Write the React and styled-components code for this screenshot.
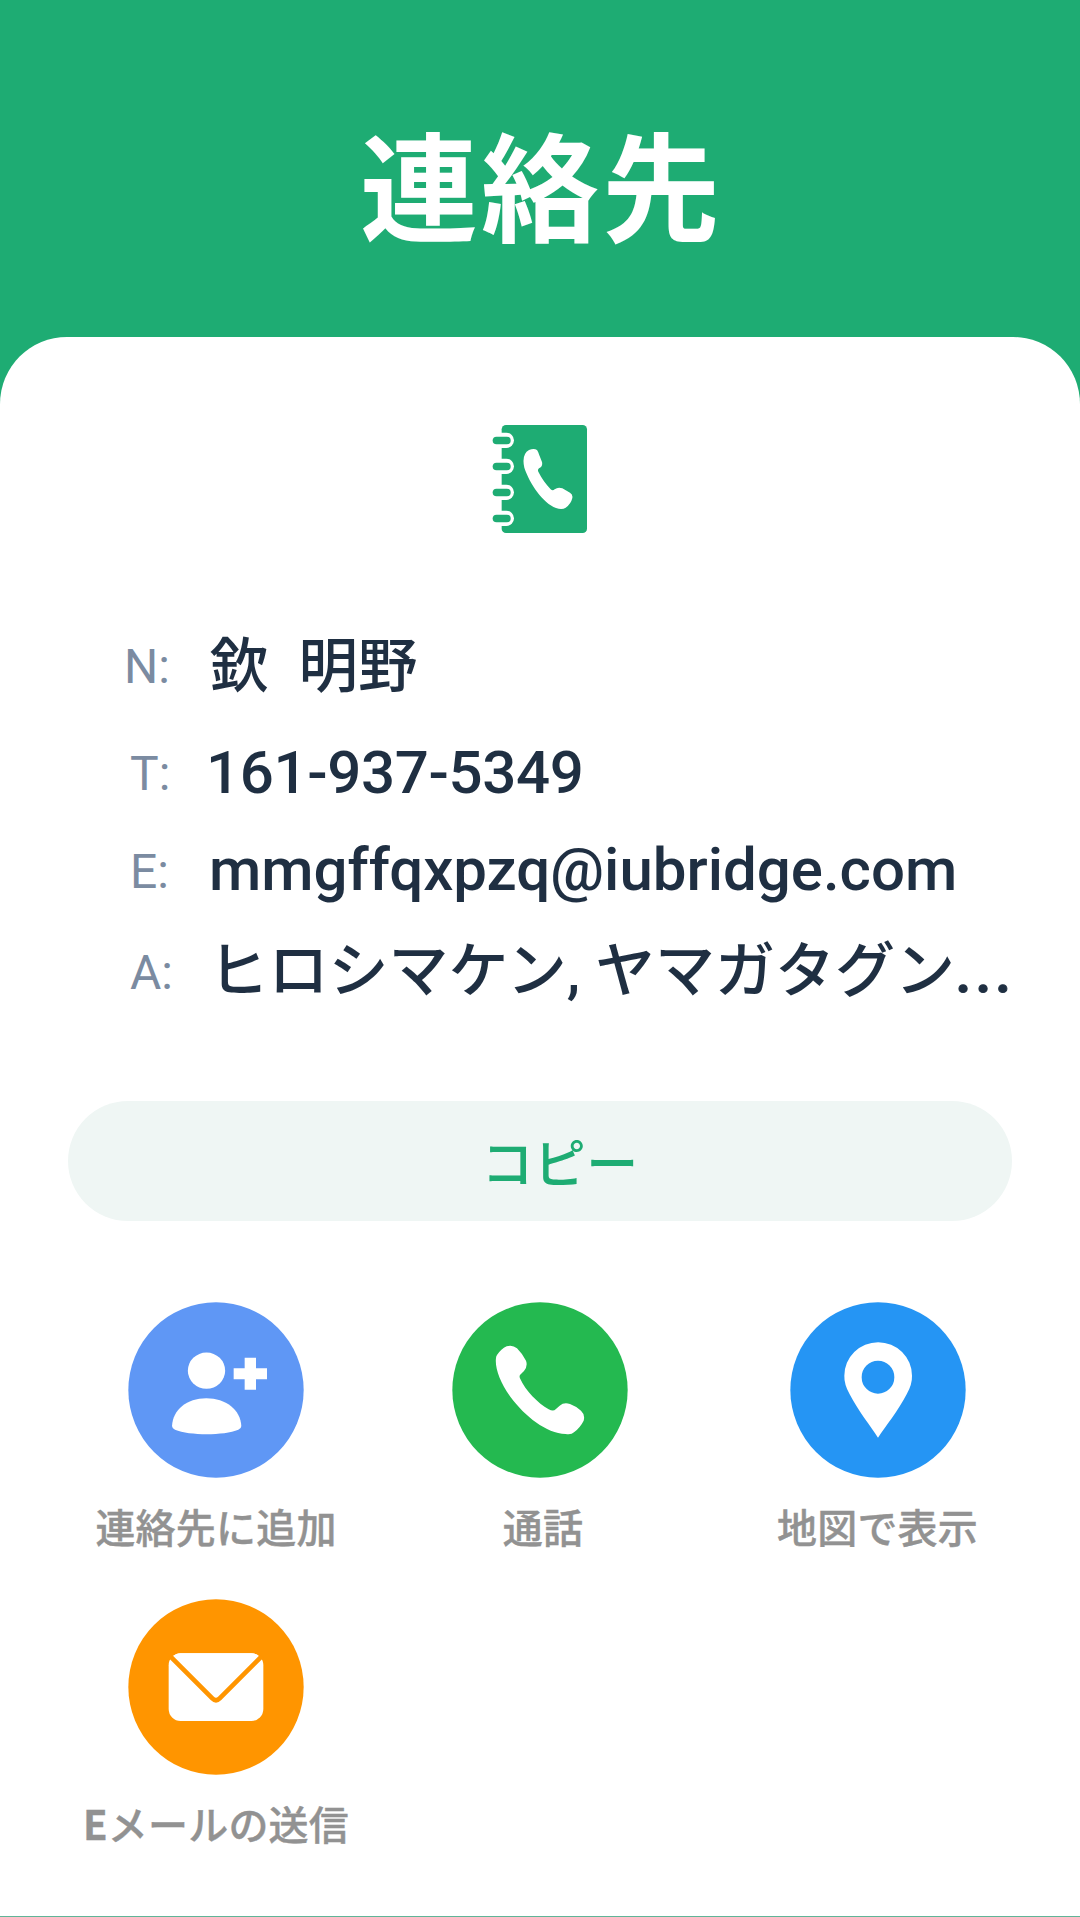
import React from "react";
import styled, { createGlobalStyle } from "styled-components";

const GlobalStyle = createGlobalStyle`
  *, *::before, *::after { box-sizing: border-box; }
  body { margin: 0; background: #1eac73; }
`;

const Page = styled.main`
  width: 1080px;
  height: 1917px;
  display: flex;
  flex-direction: column;
  overflow: hidden;
  background: #1eac73;
  font-family: Roboto, "Noto Sans CJK JP", sans-serif;
`;

const Header = styled.header`
  height: 337px;
  flex: none;
  display: flex;
  justify-content: center;
  padding: 92px 0 0 3px;
`;

const Title = styled.h1`
  margin: 0;
  font-family: "Noto Sans CJK JP", sans-serif;
  font-size: 118px;
  line-height: 180px;
  font-weight: 700;
  letter-spacing: 3px;
  color: #fff;
`;

const Card = styled.section`
  height: 1580px;
  flex: none;
  display: flex;
  flex-direction: column;
  padding: 87px 68px 0;
  border-radius: 67px 67px 0 0;
  border-bottom: 1px solid #60b497;
  background: #fff;
`;

const BookIcon = styled.svg`
  width: 96px;
  height: 110px;
  flex: none;
  align-self: center;
`;

const Details = styled.dl`
  margin: 79px 0 0;
  height: 412px;
  flex: none;
`;

const Row = styled.div`
  height: ${(p) => p.$height}px;
  display: flex;
  align-items: flex-start;
`;

const Label = styled.dt`
  width: 140px;
  padding: ${(p) => p.$top}px 0 0 ${(p) => p.$left}px;
  font-size: 48px;
  line-height: 90px;
  color: #7b8ba1;
  flex: none;
`;

const Value = styled.dd`
  margin: 0;
  padding-top: ${(p) => p.$top}px;
  margin-left: ${(p) => p.$shift || 0}px;
  font-size: ${(p) => p.$size || 60}px;
  line-height: 90px;
  font-weight: 500;
  letter-spacing: ${(p) => p.$tracking || 0}px;
  color: #1f2f42;
  white-space: pre;
`;

const Ellipsis = styled.span`
  letter-spacing: 3.2px;
  -webkit-text-stroke: 1px #1f2f42;
`;

const CopyButton = styled.button`
  width: 944px;
  height: 120px;
  margin: 76px 0 0;
  padding: 0 0 0 40px;
  flex: none;
  border: 0;
  border-radius: 60px;
  background: #eff6f4;
  color: #1eac73;
  font-family: "Noto Sans CJK JP", sans-serif;
  font-size: 52px;
  line-height: 120px;
  font-weight: 500;
  letter-spacing: 0.4px;
`;

const Actions = styled.div`
  margin: 81px -68px 0;
  display: grid;
  grid-template-columns: 432px 216px 459px;
  grid-auto-rows: 297px;
`;

const Action = styled.div`
  display: flex;
  flex-direction: column;
  align-items: center;
`;

const ActionIcon = styled.svg`
  width: 176px;
  height: 176px;
  flex: none;
`;

const ActionLabel = styled.span`
  margin-top: 18px;
  padding-left: ${(p) => p.$inset || 0}px;
  font-family: "Noto Sans CJK JP", sans-serif;
  font-size: 40px;
  line-height: 60px;
  font-weight: 500;
  letter-spacing: 0.2px;
  -webkit-text-stroke: 0.4px #929292;
  color: #929292;
  white-space: nowrap;
`;

const Initial = styled.span`
  font-weight: 700;
`;

const ContactBook = () => (
  <BookIcon viewBox="66 72 288 330">
    <rect x="95" y="75" width="256" height="324" rx="13" fill="#1eac73" />
    {[121, 199, 277, 355].map((y) => (
      <g key={y}>
        <path d={`M84 ${y - 23}H109a23 23 0 0 1 0 46H84Z`} fill="#fff" />
        <rect x="68" y={y - 11} width="54" height="23" rx="11.5" fill="#1eac73" />
      </g>
    ))}
    <path
      d="M177 150Q192 144 201 150Q206 157 208 166L216 186Q219 199 207 205Q202 209 205 215C214 234 229 254 242 268Q248 274 254 268Q264 260 277 265L300 278Q309 284 307 294Q303 312 287 323Q276 331 258 324C219 309 180 253 163 203Q154 163 177 150Z"
      fill="#fff"
    />
  </BookIcon>
);

const AddPerson = () => (
  <ActionIcon viewBox="144 37 528 528">
    <circle cx="408" cy="301" r="263" fill="#5f97f5" />
    <ellipse cx="379.500" cy="243" rx="56" ry="54.500" fill="#fff" />
    <path d="M276 409C279 360 320 326 379 326S481 360 484 409Q484 416 475 420C431 438 329 438 285 420Q276 416 276 409Z" fill="#fff" />
    <path d="M494 204h34v32h33v33h-33v31h-34v-31h-33v-33h33Z" fill="#fff" />
  </ActionIcon>
);

const Phone = () => (
  <ActionIcon viewBox="36 37 528 528">
    <circle cx="300" cy="301" r="263" fill="#24b950" />
    <path
      d="M171 196Q183 178 200 170Q217 164 231 176Q247 192 258 213Q264 229 252 244Q244 252 240 256Q237 260 241 268C256 302 294 341 326 359Q340 366 347 359L359 348Q372 337 390 343Q409 350 423 363Q436 375 431 393Q421 413 402 428Q394 436 377 433C318 430 256 381 211 321C180 279 164 234 168 205Q168 200 171 196Z"
      fill="#fff"
    />
  </ActionIcon>
);

const MapPin = () => (
  <ActionIcon viewBox="88 37 528 528">
    <circle cx="352" cy="301" r="263" fill="#2595f4" />
    <path
      fillRule="evenodd"
      d="M352 444C331 411 292 363 267 314Q250 283 251 258A101 100 0 0 1 454 258Q455 283 438 314C413 363 374 411 352 444ZM352 213A49 49.500 0 1 0 352 312A49 49.500 0 1 0 352 213Z"
      fill="#fff"
    />
  </ActionIcon>
);

const Mail = () => (
  <ActionIcon viewBox="174 28 528 528">
    <circle cx="438" cy="292" r="263" fill="#ff9500" />
    <rect x="296" y="191" width="284" height="203" rx="36" fill="#fff" />
    <path d="M311 200Q317 191 331 191H545Q559 191 567 200L445 318Q438 324 431 318Z" fill="#fff" />
    <path d="M301 200L427 326Q438 337 449 326L575 200" fill="none" stroke="#ff9500" strokeWidth="14" />
  </ActionIcon>
);

export default function App() {
  return (
    <>
      <GlobalStyle />
      <Page>
        <Header>
          <Title>連絡先</Title>
        </Header>
        <Card>
          <ContactBook />
          <Details>
            <Row $height={108}>
              <Label $top={9} $left={56}>N:</Label>
              <Value $top={9} $shift={1.5} $size={59.5}>欽  明野</Value>
            </Row>
            <Row $height={98}>
              <Label $top={8} $left={62}>T:</Label>
              <Value $top={7} $shift={-2} $tracking={-0.35}>161-937-5349</Value>
            </Row>
            <Row $height={100}>
              <Label $top={8} $left={62}>E:</Label>
              <Value $top={6} $shift={1}>mmgffqxpzq@iubridge.com</Value>
            </Row>
            <Row $height={100}>
              <Label $top={9} $left={62}>A:</Label>
              <Value $top={8} $shift={0.5}>
                ヒロシマケン, ヤマガタグン<Ellipsis>...</Ellipsis>
              </Value>
            </Row>
          </Details>
          <CopyButton type="button">コピー</CopyButton>
          <Actions>
            <Action>
              <AddPerson />
              <ActionLabel>連絡先に追加</ActionLabel>
            </Action>
            <Action>
              <Phone />
              <ActionLabel $inset={6}>通話</ActionLabel>
            </Action>
            <Action>
              <MapPin />
              <ActionLabel>地図で表示</ActionLabel>
            </Action>
            <Action>
              <Mail />
              <ActionLabel>
                <Initial>E</Initial>メールの送信
              </ActionLabel>
            </Action>
          </Actions>
        </Card>
      </Page>
    </>
  );
}
